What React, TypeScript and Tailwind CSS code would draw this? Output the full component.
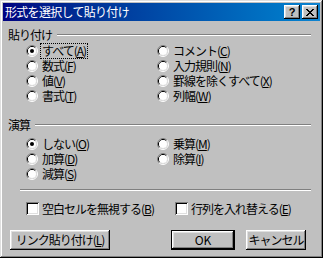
import React from "react";

const raised =
  "shadow-[inset_-1px_-1px_#000,inset_1px_1px_#fff,inset_-2px_-2px_#808080,inset_2px_2px_#dfdfdf]";

function Mn({ k }: { k: string }) {
  return (
    <span className="inline-block leading-[14px]">
      (<span className="underline underline-offset-[1px]">{k}</span>)
    </span>
  );
}

function Radio({ checked }: { checked?: boolean }) {
  return (
    <svg width="12" height="12" viewBox="0 0 12 12" className="shrink-0">
      <path d="M2.11 9.89A5.5 5.5 0 0 1 9.89 2.11" fill="none" stroke="#808080" />
      <path d="M9.89 2.11A5.5 5.5 0 0 1 2.11 9.89" fill="none" stroke="#ffffff" />
      <path d="M2.82 9.18A4.5 4.5 0 0 1 9.18 2.82" fill="none" stroke="#000000" />
      <path d="M9.18 2.82A4.5 4.5 0 0 1 2.82 9.18" fill="none" stroke="#dfdfdf" />
      <circle cx="6" cy="6" r="4" fill="#ffffff" />
      {checked && <circle cx="6" cy="6" r="2" fill="#000000" />}
    </svg>
  );
}

function Option({
  label,
  k,
  checked,
  focused,
}: {
  label: string;
  k: string;
  checked?: boolean;
  focused?: boolean;
}) {
  return (
    <div className="flex items-center h-[15px]">
      <Radio checked={checked} />
      <div
        className={`ml-[3px] flex leading-[14px] h-[14px] px-[1px] ${
          focused ? "outline-1 outline-dotted outline-black" : ""
        }`}
      >
        <span className="inline-block">{label}</span>
        <Mn k={k} />
      </div>
    </div>
  );
}

function Check({ label, k }: { label: string; k: string }) {
  return (
    <div className="flex items-center h-[15px]">
      <div className="w-[13px] h-[13px] bg-white shrink-0 shadow-[inset_1px_1px_#808080,inset_-1px_-1px_#fff,inset_2px_2px_#000,inset_-2px_-2px_#dfdfdf]" />
      <div className="ml-[3px] flex leading-[14px] h-[14px]">
        <span className="inline-block">{label}</span>
        <Mn k={k} />
      </div>
    </div>
  );
}

function GroupLabel({ text }: { text: string }) {
  return (
    <div className="flex items-center h-[16px]">
      <span className="inline-block leading-[16px]">{text}</span>
      <div className="flex-1 ml-[5px] h-[2px] border-t border-t-[#808080] border-b border-b-white" />
    </div>
  );
}

export default function App() {
  return (
    <div className="w-[323px] h-[258px] bg-[#c0c0c0] p-[3px] flex flex-col text-[12px] tracking-[-1px] text-black font-['Noto_Sans_CJK_JP','Noto_Sans',sans-serif] shadow-[inset_-1px_-1px_#000,inset_1px_1px_#dfdfdf,inset_-2px_-2px_#808080,inset_2px_2px_#fff] overflow-hidden">
      {/* title bar */}
      <div className="h-[18px] flex items-center pl-[2px] pr-[2px] bg-gradient-to-r from-[#000080] to-[#1084d0]">
        <span className="flex-1 text-white leading-[18px] tracking-[-0.7px]">形式を選択して貼り付け</span>
        <div className={`w-[16px] h-[14px] bg-[#c0c0c0] ${raised} flex items-center justify-center`}>
          <span className="font-['Liberation_Sans',sans-serif] font-bold text-[11px] leading-[11px] tracking-normal">?</span>
        </div>
        <div className={`ml-[2px] w-[16px] h-[14px] bg-[#c0c0c0] ${raised} flex items-center justify-center`}>
          <svg width="8" height="7" viewBox="0 0 8 7" shapeRendering="crispEdges">
            <path d="M0 0h2v1h-2zM6 0h2v1h-2zM1 1h2v1h-2zM5 1h2v1h-2zM2 2h4v1h-4zM3 3h2v1h-2zM2 4h4v1h-4zM1 5h2v1h-2zM5 5h2v1h-2zM0 6h2v1h-2zM6 6h2v1h-2z" fill="#000" />
          </svg>
        </div>
      </div>

      {/* body */}
      <div className="flex-1 flex flex-col pl-[5px] pr-[9px]">
        <div className="mt-[6px]">
          <GroupLabel text="貼り付け" />
        </div>
        <div className="grid grid-cols-[131px_1fr] pl-[18px]">
          <div className="flex flex-col">
            <Option label="すべて" k="A" checked focused />
            <Option label="数式" k="F" />
            <Option label="値" k="V" />
            <Option label="書式" k="T" />
          </div>
          <div className="flex flex-col">
            <Option label="コメント" k="C" />
            <Option label="入力規則" k="N" />
            <Option label="罫線を除くすべて" k="X" />
            <Option label="列幅" k="W" />
          </div>
        </div>

        <div className="mt-[14px]">
          <GroupLabel text="演算" />
        </div>
        <div className="grid grid-cols-[131px_1fr] pl-[18px] mt-[3px]">
          <div className="flex flex-col">
            <Option label="しない" k="O" checked />
            <Option label="加算" k="D" />
            <Option label="減算" k="S" />
          </div>
          <div className="flex flex-col">
            <Option label="乗算" k="M" />
            <Option label="除算" k="I" />
          </div>
        </div>

        <div className="mt-[8px] ml-[12px] h-[2px] border-t border-t-[#808080] border-b border-b-white" />

        <div className="grid grid-cols-[149px_1fr] pl-[18px] mt-[10px]">
          <Check label="空白セルを無視する" k="B" />
          <Check label="行列を入れ替える" k="E" />
        </div>

        <div className="flex mt-[14px]">
          <button className={`ml-[2px] w-[100px] h-[20px] bg-[#c0c0c0] ${raised} flex items-center justify-center`}>
            <span className="inline-block leading-[14px]">リンク貼り付け</span>
            <Mn k="L" />
          </button>
          <button className="ml-[61px] w-[64px] h-[20px] border border-black p-0">
            <div className={`w-full h-full bg-[#c0c0c0] ${raised} leading-[18px] tracking-normal`}>OK</div>
          </button>
          <button className={`ml-[11px] w-[60px] h-[20px] bg-[#c0c0c0] ${raised} flex items-center justify-center`}>
            <span className="inline-block leading-[14px]">キャンセル</span>
          </button>
        </div>
      </div>
    </div>
  );
}
